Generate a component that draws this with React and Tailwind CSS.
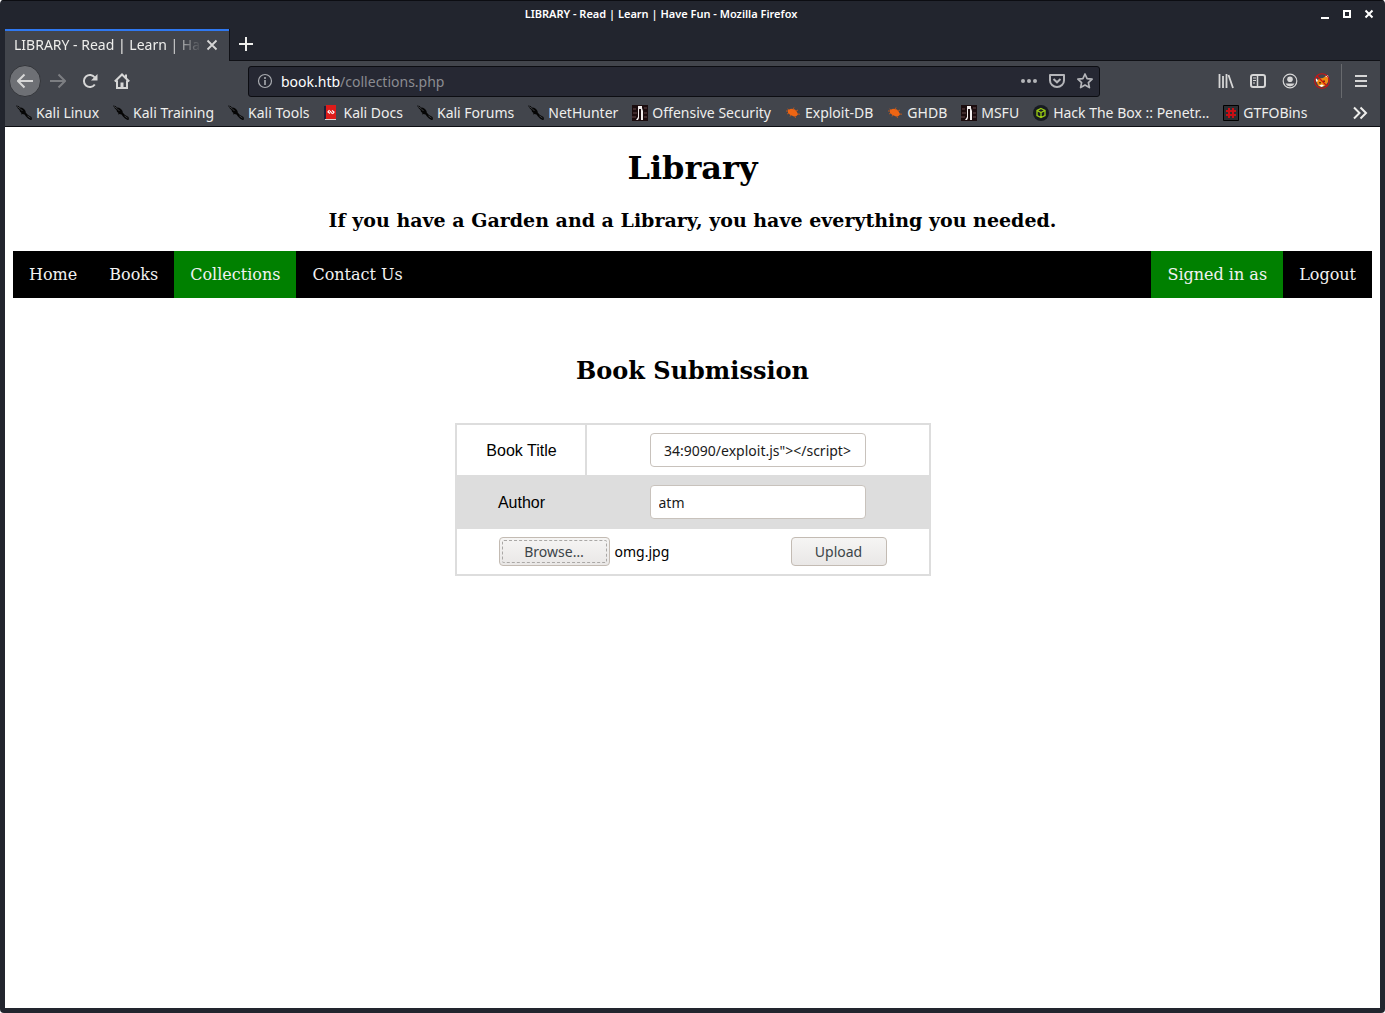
import React from "react";

const Dragon = () => (
  <svg viewBox="0 0 16 16" className="size-4" aria-hidden="true">
    <path fill="#050505" d="M0 .5l2.500.5L4 2.500l2 .2 2 1.300L9.500 6l.3 1.800L12 10l3.500 2 .5 2.500-1.500.5-2.500-1.500L10 11.500 8.500 9.500 6.500 9 5 9.500 5.500 8 4 6.800 3.500 5 1.500 3z" />
    <path stroke="#777a80" strokeWidth=".5" d="M1 1.500l3 2L6.500 6m5 5l3 2" fill="none" />
  </svg>
);

const Docs = () => (
  <svg viewBox="0 0 16 16" className="size-4" aria-hidden="true">
    <path fill="#1c2038" d="M1 1h3v13H1z" />
    <path fill="#dd1c1a" d="M3 0h10v14H3z" />
    <path fill="#d8d4d4" d="M2 14h11v1H2z" />
    <path d="M6.500 5L5 7l2 1.500M7 6l2 2.500M9 5.500l2 1.500-1.500 2" fill="none" stroke="#fff" strokeWidth="1.200" />
  </svg>
);

const Offsec = () => (
  <svg viewBox="0 0 16 16" className="size-4" aria-hidden="true">
    <path fill="#1b0c0e" d="M0 0h16v16H0z" />
    <path stroke="#67494b" d="M1 4h3M12 3h3M1 8h4M12 8h3M0 12h4M12 12h3" />
    <path fill="#f3eeee" d="M6 1h4v2l1 3v9H9V4H7v9l-1 2H4l2-3z" />
  </svg>
);

const Bug = () => (
  <svg viewBox="0 0 16 16" className="size-4" aria-hidden="true">
    <path fill="#ee6513" d="M3 5l3-1.200 4 .7 2 2.500 1 2.500-1.500 1.500-2.500.4-4-1.600L3 7.500z" />
    <path stroke="#d95a12" strokeWidth=".8" d="M4 5L2.500 4M8 4l1-1.500M11 6l2-1M12 9l3 .2M4 8L2 9M6 10l-1 1.500M10 11l.5 2M3 6H1" />
  </svg>
);

const Cube = () => (
  <svg viewBox="0 0 16 16" className="size-4" aria-hidden="true">
    <circle cx="8" cy="8" r="8" fill="#171b20" />
    <path d="M8 3.500l4 1.800v5.200l-4 2-4-2V5.300zM4 5.500L8 7.500l4-2M8 7.500v5" fill="none" stroke="#9acc14" strokeWidth="1.300" />
  </svg>
);

const Hash = () => (
  <svg viewBox="0 0 16 16" className="size-4" aria-hidden="true">
    <path fill="#2c2d31" stroke="#000" d="M.5.5h15v15H.5z" />
    <path d="M6 3v10M10 3v10M3 6h10M3 10h10" stroke="#c80f14" strokeWidth="2" />
  </svg>
);

const bookmarks = [
  ["Kali Linux", Dragon],
  ["Kali Training", Dragon],
  ["Kali Tools", Dragon],
  ["Kali Docs", Docs],
  ["Kali Forums", Dragon],
  ["NetHunter", Dragon],
  ["Offensive Security", Offsec],
  ["Exploit-DB", Bug],
  ["GHDB", Bug],
  ["MSFU", Offsec],
  ["Hack The Box :: Penetr…", Cube],
  ["GTFOBins", Hash],
];

function Icon({ children, className = "size-4" }) {
  return (
    <svg viewBox="0 0 16 16" className={className} fill="none" stroke="currentColor" strokeWidth="2" aria-hidden="true">
      {children}
    </svg>
  );
}

function TitleBar() {
  return (
    <header className="grid h-[29px] grid-cols-[1fr_auto_1fr] items-center border-t border-[#0c0d12] pr-2.5 pb-0.5 text-white">
      <span />
      <span className="mr-[53px] text-[11px] leading-4 font-semibold">LIBRARY - Read | Learn | Have Fun - Mozilla Firefox</span>
      <div className="flex justify-end gap-[10px]">
        <button aria-label="Minimize" className="size-3">
          <svg viewBox="0 0 12 12" className="size-3"><path d="M2 10h8" stroke="#fff" strokeWidth="2" /></svg>
        </button>
        <button aria-label="Maximize" className="size-3">
          <svg viewBox="0 0 12 12" className="size-3"><path d="M3 3h6v6H3z" fill="none" stroke="#fff" strokeWidth="2" /></svg>
        </button>
        <button aria-label="Close window" className="size-3">
          <svg viewBox="0 0 12 12" className="size-3"><path d="M2.500 2.500l7 7m0-7l-7 7" stroke="#fff" strokeWidth="2" /></svg>
        </button>
      </div>
    </header>
  );
}

function TabStrip() {
  return (
    <div className="flex h-8 px-[5px]">
      <div className="flex w-56 items-center border-t-2 border-[#2f78f0] bg-[#42454c] pr-[11px] pb-0.5 pl-[9px]">
        <span className="flex-1 overflow-hidden whitespace-nowrap [mask-image:linear-gradient(to_right,black_82%,transparent)]">LIBRARY - Read | Learn | Have Fun</span>
        <button aria-label="Close tab" className="ml-1 size-3">
          <svg viewBox="0 0 12 12" className="size-3"><path d="M1.500 1.500l9 9m0-9l-9 9" stroke="#d6d6d6" strokeWidth="1.800" /></svg>
        </button>
      </div>
      <div className="flex flex-1 items-center border-b border-l border-[#101116] pb-0.5 pl-2">
        <button aria-label="New tab" className="size-4">
          <Icon><path d="M8 1v14M1 8h14" /></Icon>
        </button>
      </div>
    </div>
  );
}

function NavBar() {
  return (
    <div className="flex h-10 items-center bg-[#42454c] pr-[11px] pl-1 text-[#d6d6d6]">
      <button aria-label="Back" className="flex size-8 items-center justify-center rounded-full border border-[#33353a] bg-[#6e7075]">
        <Icon><path d="M16 8H1M7.500 1.500L1 8l6.500 6.500" /></Icon>
      </button>
      <div className="ml-[9px] flex gap-4">
        <button aria-label="Forward" className="text-[#7c7e82]">
          <Icon><path d="M0 8h15M8.500 1.500L15 8l-6.500 6.500" /></Icon>
        </button>
        <button aria-label="Reload">
          <Icon><path d="M12.800 11.500A6 6 0 1 1 12.800 4.500" /><path d="M15.500 1v6.500H9z" fill="currentColor" stroke="none" /></Icon>
        </button>
        <button aria-label="Home">
          <Icon><path d="M.8 8.500L8 1.500l7.200 7M3 7.500V15h10V7.500" /><path d="M6.500 15V9.500h3V15z" fill="currentColor" stroke="none" /><path d="M12 1.500V5" /></Icon>
        </button>
      </div>
      <div className="mx-[118px] flex h-[31px] flex-1 items-center rounded-[3px] border border-[#0c0d12] bg-[#262833] pr-1.5 pl-2">
        <svg viewBox="0 0 16 16" className="size-4 text-[#a9abb0]" fill="none" stroke="currentColor" aria-hidden="true">
          <circle cx="8" cy="8" r="6.500" strokeWidth="1.200" />
          <path d="M8 7v5M8 4v2" strokeWidth="1.600" />
        </svg>
        <div className="ml-2 flex-1 pt-0.5 whitespace-nowrap text-[#8b8c91]"><span className="text-white">book.htb</span>/collections.php</div>
        <div className="flex gap-3 text-[#b4b5b9]">
          <button aria-label="Page actions">
            <svg viewBox="0 0 16 16" className="size-4" fill="currentColor"><circle cx="2" cy="8" r="2" /><circle cx="8" cy="8" r="2" /><circle cx="14" cy="8" r="2" /></svg>
          </button>
          <button aria-label="Save to Pocket">
            <Icon><path d="M1 2h14v5.500a7 6.500 0 0 1-14 0z" strokeLinejoin="round" /><path d="M4.500 6L8 9.300 11.500 6" /></Icon>
          </button>
          <button aria-label="Bookmark page">
            <Icon><path strokeWidth="1.700" strokeLinejoin="round" d="M8 1l2.100 4.600 5 .6-3.700 3.400 1 5L8 12.100l-4.400 2.500 1-5L.9 6.200l5-.6z" /></Icon>
          </button>
        </div>
      </div>
      <div className="flex gap-4">
        <button aria-label="Library"><Icon><path d="M1.500 1v14M5 3v12M8.500 1v14M10.500 2L15 15" strokeWidth="1.800" /></Icon></button>
        <button aria-label="Sidebars">
          <Icon><rect x="1" y="2" width="14" height="12" rx="2" /><path d="M7.500 2v12" strokeWidth="1.500" /><path d="M3 5h3M3 7.500h3M3 10h2" strokeWidth="1" /></Icon>
        </button>
        <button aria-label="Account">
          <Icon><circle cx="8" cy="8" r="6.800" strokeWidth="1.200" /><circle cx="8" cy="6.300" r="2.800" fill="currentColor" stroke="none" /><path d="M3.500 10.500h9L11 12.500l-3 1-3-1z" fill="currentColor" stroke="none" /></Icon>
        </button>
        <button aria-label="FoxyProxy">
          <svg viewBox="0 0 16 16" className="size-4">
            <path fill="#ef8912" d="M2.500 9L5 5.500l4-.5 3-2 2.500 1-.5 5-2.500 3.500-3 1.500-4-1z" />
            <path fill="#fff" d="M1 5l2 1 1 2-1.500 1zM11 3l3-1 .5 3zM5 12.500l3-1 2 1-2.500 1.500z" />
            <path fill="#6c3510" d="M5 9h2v1.500H5zM9 7.500h2V9H9z" />
            <circle cx="8" cy="8" r="7.300" fill="none" stroke="#cf1212" strokeWidth="1.100" />
            <path d="M3 3l10 10" stroke="#cf1212" strokeWidth="1.200" />
          </svg>
        </button>
      </div>
      <div className="mx-[11px] h-[34px] w-px bg-[#686a6e]" />
      <button aria-label="Menu"><Icon><path d="M2 3h12M2 8h12M2 13h12" /></Icon></button>
    </div>
  );
}

function Bookmarks() {
  return (
    <nav aria-label="Bookmarks" className="flex h-[26px] items-center border-b border-[#0c0d12] bg-[#42454c] pr-3 pb-0.5 pl-[11px]">
      <ul className="flex flex-1 gap-[14px]">
        {bookmarks.map(([label, Mark]) => (
          <li key={label}>
            <a href="#" className="flex items-center gap-1 whitespace-nowrap"><Mark />{label}</a>
          </li>
        ))}
      </ul>
      <button aria-label="More bookmarks"><Icon><path d="M2 2.500L7.500 8 2 13.500M8.500 2.500L14 8l-5.500 5.500" /></Icon></button>
    </nav>
  );
}

function SiteNav() {
  const link = "px-4 py-[14px]";
  return (
    <nav className="mt-5 flex bg-black text-base leading-[19px] text-[#f2f2f2]">
      <a href="#" className={link}>Home</a>
      <a href="#" className={link}>Books</a>
      <a href="#" className={`${link} bg-[#008000]`}>Collections</a>
      <a href="#" className={link}>Contact Us</a>
      <a href="#" className={`${link} ml-auto bg-[#008000]`}>Signed in as</a>
      <a href="#" className={link}>Logout</a>
    </nav>
  );
}

const field = "h-[34px] w-[216px] rounded border border-[#c8c2bc] bg-white px-2 align-middle font-['Noto_Sans',sans-serif] text-sm text-[#1a1a1a]";
const button = "flex h-[29px] items-center justify-center rounded border border-[#c3bbb3] bg-linear-to-b from-[#f6f5f4] to-[#e9e7e6] text-[#3c4448]";

function SubmissionForm() {
  return (
    <form onSubmit={(e) => e.preventDefault()}>
      <table className="mx-auto mt-[38px] w-[476px] table-fixed border-collapse border-2 border-[#dddddd] text-center font-['Liberation_Sans',sans-serif] text-base">
        <colgroup>
          <col className="w-[130px]" />
          <col />
        </colgroup>
        <tbody>
          <tr className="h-[52px]">
            <td className="border-2 border-[#dddddd] pt-0.5 pl-0.5"><label htmlFor="title">Book Title</label></td>
            <td className="border-2 border-[#dddddd]"><input id="title" className={`${field} text-center`} defaultValue={'34:9090/exploit.js"></script>'} /></td>
          </tr>
          <tr className="h-[52px] bg-[#dddddd]">
            <td className="border-2 border-[#dddddd] pt-0.5 pl-0.5"><label htmlFor="author">Author</label></td>
            <td className="border-2 border-[#dddddd]"><input id="author" className={field} defaultValue="atm" /></td>
          </tr>
          <tr className="h-[47px]">
            <td colSpan={2} className="border-2 border-[#dddddd] px-[42px] font-['Noto_Sans',sans-serif] text-sm">
              <div className="flex items-center">
                <input id="file" type="file" className="sr-only" />
                <label htmlFor="file" className={`${button} w-[111px] p-0.5`}>
                  <span className="flex h-full w-full items-center justify-center rounded-xs border border-dashed border-[#aaa8a6]">Browse…</span>
                </label>
                <span className="ml-[5px]">omg.jpg</span>
                <button type="submit" className={`${button} ml-auto w-24`}>Upload</button>
              </div>
            </td>
          </tr>
        </tbody>
      </table>
    </form>
  );
}

export default function App() {
  return (
    <div className="flex min-h-screen flex-col overflow-hidden rounded-[4px] bg-[#22252e] font-['Noto_Sans',sans-serif] text-sm leading-5 text-[#eeeeec]">
      <TitleBar />
      <TabStrip />
      <div className="mx-[5px] mb-[5px] flex flex-1 flex-col">
        <NavBar />
        <Bookmarks />
        <main className="flex-1 bg-white px-2 pt-[23px] text-center font-['DejaVu_Serif',serif] text-black">
          <h1 className="text-[32px] leading-[37px] font-bold">Library</h1>
          <h3 className="mt-[22px] text-[19px] leading-[22px] font-bold">If you have a Garden and a Library, you have everything you needed.</h3>
          <SiteNav />
          <h2 className="mt-[59px] text-2xl leading-7 font-bold">Book Submission</h2>
          <SubmissionForm />
        </main>
      </div>
    </div>
  );
}
